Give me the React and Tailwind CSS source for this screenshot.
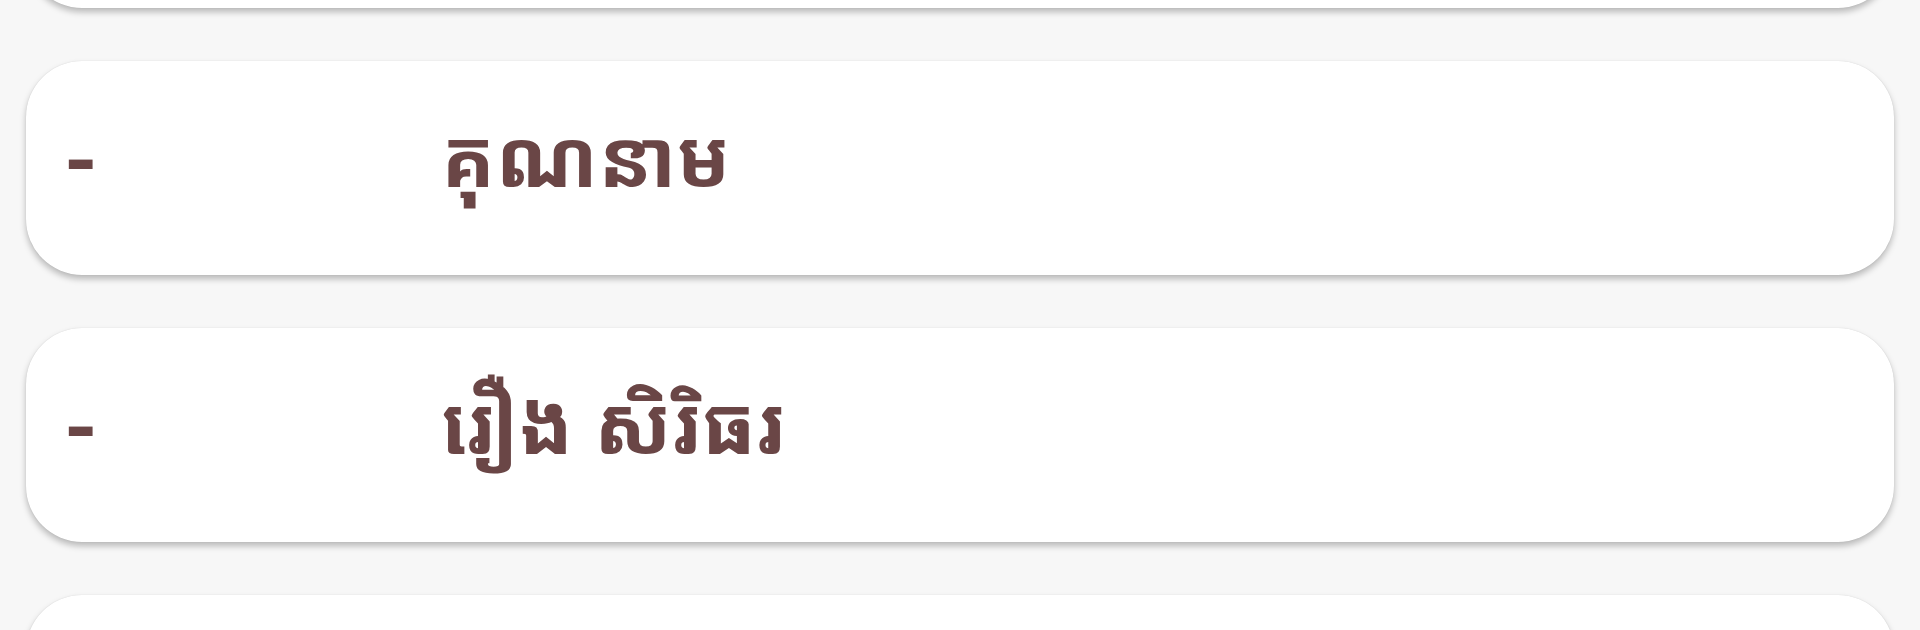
const rows = [
  { id: 1, label: null },
  { id: 2, label: "គុណនាម" },
  { id: 3, label: "រឿង សិរិធរ" },
  { id: 4, label: null },
];

export default function App() {
  return (
    <div className="h-[630px] overflow-hidden bg-[#f7f7f7] px-[26px]">
      <div className="-mt-[206px] flex flex-col gap-[53px]">
        {rows.map((r) => (
          <div
            key={r.id}
            className="flex h-[214px] items-center rounded-[56px] bg-white shadow-[0_4px_6px_rgba(0,0,0,0.25),0_0_1px_rgba(0,0,0,0.15)]"
          >
            {r.label && (
              <>
                <div className="w-[415px] shrink-0 pl-[38px] pb-[14px] font-['Roboto',sans-serif] text-[86px] font-bold leading-none text-[#6a4646]">
                  -
                </div>
                <div className="pb-[24px] font-['Noto_Sans_Khmer','Khmer_OS_Battambang','Noto_Sans',sans-serif] text-[80px] font-bold leading-none text-[#6a4646]">
                  {r.label}
                </div>
              </>
            )}
          </div>
        ))}
      </div>
    </div>
  );
}
